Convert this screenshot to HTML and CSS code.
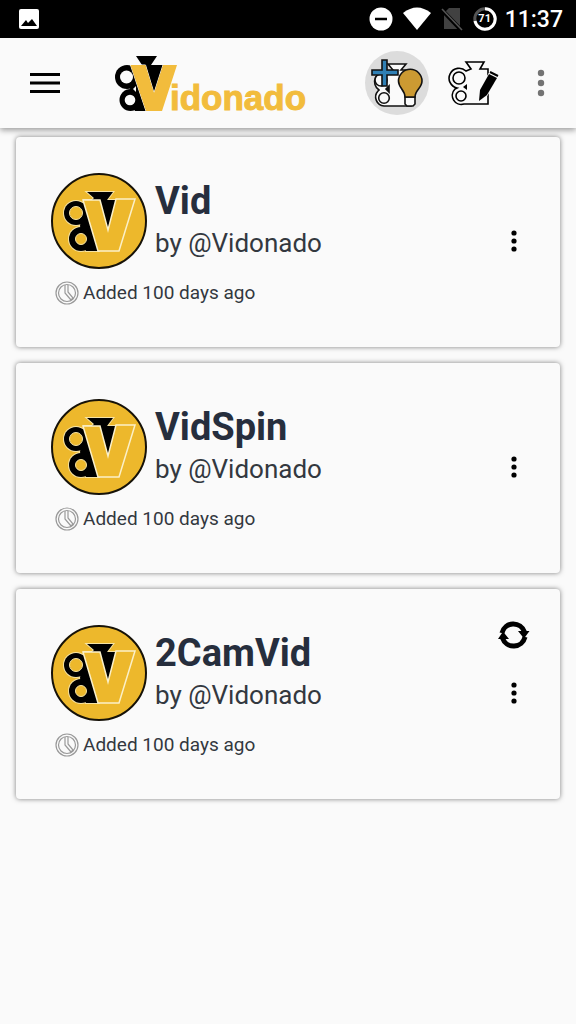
FILE: index.html
```html
<!DOCTYPE html>
<html lang="en">
<head>
<meta charset="utf-8">
<meta name="viewport" content="width=device-width, initial-scale=1">
<title>Vidonado</title>
<link rel="stylesheet" href="styles.css">
</head>
<body>
<svg class="defs" aria-hidden="true">
  <symbol id="badge" viewBox="51 173 96 96">
    <circle cx="99" cy="221" r="47" fill="#edb82c" stroke="#161208" stroke-width="2"/>
    <g fill="#f6e3a4" stroke="#f6e3a4" stroke-width="2">
      <path d="M87 192H113L107 200H116L108 231L99 251H86L80 226L84 200H92L94 198Z"/>
      <circle cx="76" cy="213" r="12"/><circle cx="81" cy="239" r="12"/>
    </g>
    <path d="M87 192H113L107 200H116L108 231L99 251H86L80 226L84 200H92L94 198Z" fill="#000"/>
    <circle cx="76" cy="213" r="12" fill="#000"/><circle cx="81" cy="239" r="12" fill="#000"/>
    <g fill="#edb82c" stroke="#f6e3a4"><circle cx="76" cy="213" r="6.500"/><circle cx="81" cy="239" r="5.500"/></g>
    <path d="M83 200H100L108 230L116 199H135L119 251H98Z" fill="#edb82c" stroke="#fbf0c8" stroke-width="1.500"/>
  </symbol>
  <symbol id="clock" viewBox="0 0 24 24">
    <g fill="none" stroke="#999" stroke-width="1.200"><circle cx="12" cy="12" r="11"/><circle cx="12" cy="12" r="8.500"/><path d="M10 4V12L16 19L18 17L13 11V4"/></g>
  </symbol>
  <symbol id="dots" viewBox="0 0 8 24"><circle cx="4" cy="4" r="2.600"/><circle cx="4" cy="12" r="2.600"/><circle cx="4" cy="20" r="2.600"/></symbol>
</svg>

<div class="status">
  <svg class="status-photo" viewBox="0 0 22 22"><rect x="1" y="1" width="20" height="20" rx="2" fill="#fff"/><path d="M3 18L8 12L10 15L14 11L19 18Z" fill="#000"/></svg>
  <div class="status-right">
    <svg class="status-dnd" viewBox="0 0 24 24"><circle cx="12" cy="12" r="11.500" fill="#fff"/><path d="M6 12H18" stroke="#000" stroke-width="2.500"/></svg>
    <svg class="status-wifi" viewBox="0 0 28 24"><path d="M0 6Q14-5 28 6L14 23Z" fill="#fff"/></svg>
    <svg class="status-sim" viewBox="0 0 22 24"><path d="M8 1H19V22H3V6Z" fill="#414141"/><path d="M0 2L20 23" stroke="#000" stroke-width="4"/><path d="M1 2L21 23" stroke="#555" stroke-width="1.600"/></svg>
    <span class="battery">
      <svg viewBox="0 0 24 24"><circle cx="12" cy="12" r="10.200" fill="none" stroke="#555" stroke-width="3"/><path d="M12 1.800A10.200 10.200 0 1 1 2 14" fill="none" stroke="#fff" stroke-width="3"/></svg>
      <span class="battery-level">71</span>
    </span>
    <span class="time">11:37</span>
  </div>
</div>

<header class="appbar">
  <button class="menu" aria-label="Menu"><svg viewBox="0 0 30 22"><path d="M0 2.500H30M0 11H30M0 19.500H30" stroke="#000" stroke-width="3"/></svg></button>
  <div class="brand">
    <svg class="brand-mark" viewBox="115 54 62 56">
      <path d="M136 55H157L151 64H164L154 92L146 110H135L130 88L134 64H142Z" fill="#000"/>
      <circle cx="127" cy="76" r="12" fill="#000"/>
      <circle cx="130.500" cy="99" r="11" fill="#000"/>
      <circle cx="126.500" cy="76" r="6.500" fill="#fafafa"/>
      <circle cx="130" cy="99" r="5.300" fill="#fafafa"/>
      <path d="M133 88L136 85V91Z" fill="#fafafa"/>
      <path d="M130.500 64H145.500L154 92L163 64H177L162 110H146Z" fill="#f2bc3c" stroke="#fafafa" stroke-width="1" paint-order="stroke"/>
    </svg>
    <span class="brand-text">idonado</span>
  </div>
  <div class="actions">
    <button class="action action-new" aria-label="New idea">
      <svg viewBox="365 51 64 64">
        <g fill="#fafafa" stroke="#111" stroke-width="1.600">
          <path d="M388 64H406L401 70H411V106H384A9 9 0 0 1 378 91L379 90A10 10 0 0 1 387 72L393 70Z"/>
          <circle cx="381" cy="80" r="6"/><circle cx="384" cy="98" r="5.300"/>
          <path d="M386 89L389 86V92Z" fill="#111"/>
          <path d="M405 97H415V104L413 106H407L405 104Z"/>
          <path d="M405 97C405 90 398.500 88 398.500 81A11.700 11.700 0 0 1 422 81C422 88 415 90 415 97Z" fill="#cc9a32"/>
          <path d="M382 60H387V70H398V75H387V86H382V75H372V70H382Z" fill="#2f80b5"/>
        </g>
      </svg>
    </button>
    <button class="action action-edit" aria-label="Edit">
      <svg viewBox="448 51 52 64">
        <path d="M466 62H484L480 69H488V104H464A9 9 0 0 1 455 89L457 88A10 10 0 1 1 466 71L471 69Z" fill="#fafafa" stroke="#000" stroke-width="1.600"/>
        <g fill="#fafafa" stroke="#000" stroke-width="1.600"><circle cx="459" cy="78" r="6"/><circle cx="461" cy="96" r="5"/></g>
        <path d="M463 87L467 84V90Z"/>
        <path d="M480 90L489 74L497 78L487 95L479 101Z" stroke="#fafafa" stroke-width="1.600" paint-order="stroke"/><path d="M490 72L498 76" stroke="#000" stroke-width="2"/>
      </svg>
    </button>
    <button class="overflow" aria-label="More options"><svg viewBox="0 0 8 28"><circle cx="4" cy="4" r="3.200"/><circle cx="4" cy="14" r="3.200"/><circle cx="4" cy="24" r="3.200"/></svg></button>
  </div>
</header>

<main class="list">
  <article class="card">
    <div class="info">
      <div class="head"><svg class="avatar"><use href="#badge"/></svg><div><h2 class="title">Vid</h2><p class="author">by @Vidonado</p></div></div>
      <p class="added"><svg class="clock"><use href="#clock"/></svg>Added 100 days ago</p>
    </div>
    <div class="side"><button class="more" aria-label="More"><svg><use href="#dots"/></svg></button></div>
  </article>
  <article class="card">
    <div class="info">
      <div class="head"><svg class="avatar"><use href="#badge"/></svg><div><h2 class="title">VidSpin</h2><p class="author">by @Vidonado</p></div></div>
      <p class="added"><svg class="clock"><use href="#clock"/></svg>Added 100 days ago</p>
    </div>
    <div class="side"><button class="more" aria-label="More"><svg><use href="#dots"/></svg></button></div>
  </article>
  <article class="card">
    <div class="info">
      <div class="head"><svg class="avatar"><use href="#badge"/></svg><div><h2 class="title">2CamVid</h2><p class="author">by @Vidonado</p></div></div>
      <p class="added"><svg class="clock"><use href="#clock"/></svg>Added 100 days ago</p>
    </div>
    <div class="side">
      <button class="sync" aria-label="Sync"><svg viewBox="498 620 32 30"><path d="M502 633A11.700 11.700 0 0 1 524.500 632M525 637A11.700 11.700 0 0 1 502.500 638" fill="none" stroke="#000" stroke-width="5"/><path d="M518 631H529.500L524 638.500ZM498 639H509L503 631.500Z"/></svg></button>
      <button class="more" aria-label="More"><svg><use href="#dots"/></svg></button>
    </div>
  </article>
</main>
</body>
</html>
```
FILE: styles.css
```css
* { box-sizing: border-box; }
body {
  margin: 0;
  min-height: 100vh;
  background: #fafafa;
  color: #262e3d;
  font-family: Roboto, sans-serif;
}
svg { display: block; }
.defs { position: absolute; width: 0; height: 0; }
button {
  display: flex;
  align-items: center;
  justify-content: center;
  padding: 0;
  border: 0;
  background: none;
  cursor: pointer;
}

.status {
  display: flex;
  align-items: center;
  justify-content: space-between;
  height: 38px;
  padding: 0 13px 0 18px;
  background: #000;
  color: #fff;
}
.status-right { display: flex; align-items: center; }
.status-photo { width: 22px; height: 22px; }
.status-dnd { width: 24px; height: 24px; margin-right: 10px; }
.status-wifi { width: 28px; height: 24px; margin-right: 10px; }
.status-sim { width: 22px; height: 24px; margin-right: 10px; }
.battery { display: grid; place-items: center; width: 24px; height: 24px; margin-right: 8px; }
.battery > * { grid-area: 1 / 1; }
.battery svg { width: 24px; height: 24px; }
.battery-level { font-size: 11px; font-weight: 700; line-height: 12px; }
.time { padding-top: 2px; font-size: 23px; line-height: 28px; font-weight: 500; }

.appbar {
  display: flex;
  align-items: center;
  height: 90px;
  padding: 0 31px 0 30px;
  background: #fafafa;
  box-shadow: 0 2px 6px rgba(0, 0, 0, .4);
}
.menu svg { width: 30px; height: 22px; }
.brand { display: flex; align-items: flex-end; margin-left: 55px; }
.brand-mark { width: 62px; height: 56px; }
.brand-text {
  margin-left: -7px;
  color: #f2bc3c;
  font: 700 35px/26px "Liberation Sans", Arial, sans-serif;
  -webkit-text-stroke: 1px #f2bc3c;
}
.actions { display: flex; align-items: center; margin-left: auto; }
.action { height: 64px; }
.action-new { width: 64px; margin-right: 19px; border-radius: 50%; background: #dcdcdc; }
.action-new svg { width: 64px; height: 64px; }
.action-edit { width: 52px; margin-right: 37px; }
.action-edit svg { width: 52px; height: 64px; }
.overflow svg { width: 8px; height: 28px; fill: #737373; }

.list { display: grid; gap: 16px; padding: 9px 16px; }
.card {
  display: flex;
  justify-content: space-between;
  min-height: 210px;
  padding: 36px 30px 36px 35px;
  border-radius: 4px;
  background: #fafafa;
  box-shadow: 0 0 5px rgba(0, 0, 0, .5);
}
.head { display: flex; gap: 8px; }
.avatar { width: 96px; height: 96px; }
.title { margin: 4px 0 0; font-size: 38px; line-height: 48px; font-weight: 700; }
.author { margin: 2px 0 0; font-size: 26px; line-height: 32px; color: #33383f; }
.added { display: flex; align-items: center; gap: 4px; margin: 12px 0 0 4px; font-size: 19px; line-height: 24px; color: #33383f; }
.clock { width: 24px; height: 24px; }
.side { display: flex; flex-direction: column; align-items: center; width: 32px; padding-bottom: 58px; }
.sync { margin-top: -5px; }
.sync svg { width: 32px; height: 30px; }
.more { margin-top: auto; }
.more svg { width: 8px; height: 24px; }
```
